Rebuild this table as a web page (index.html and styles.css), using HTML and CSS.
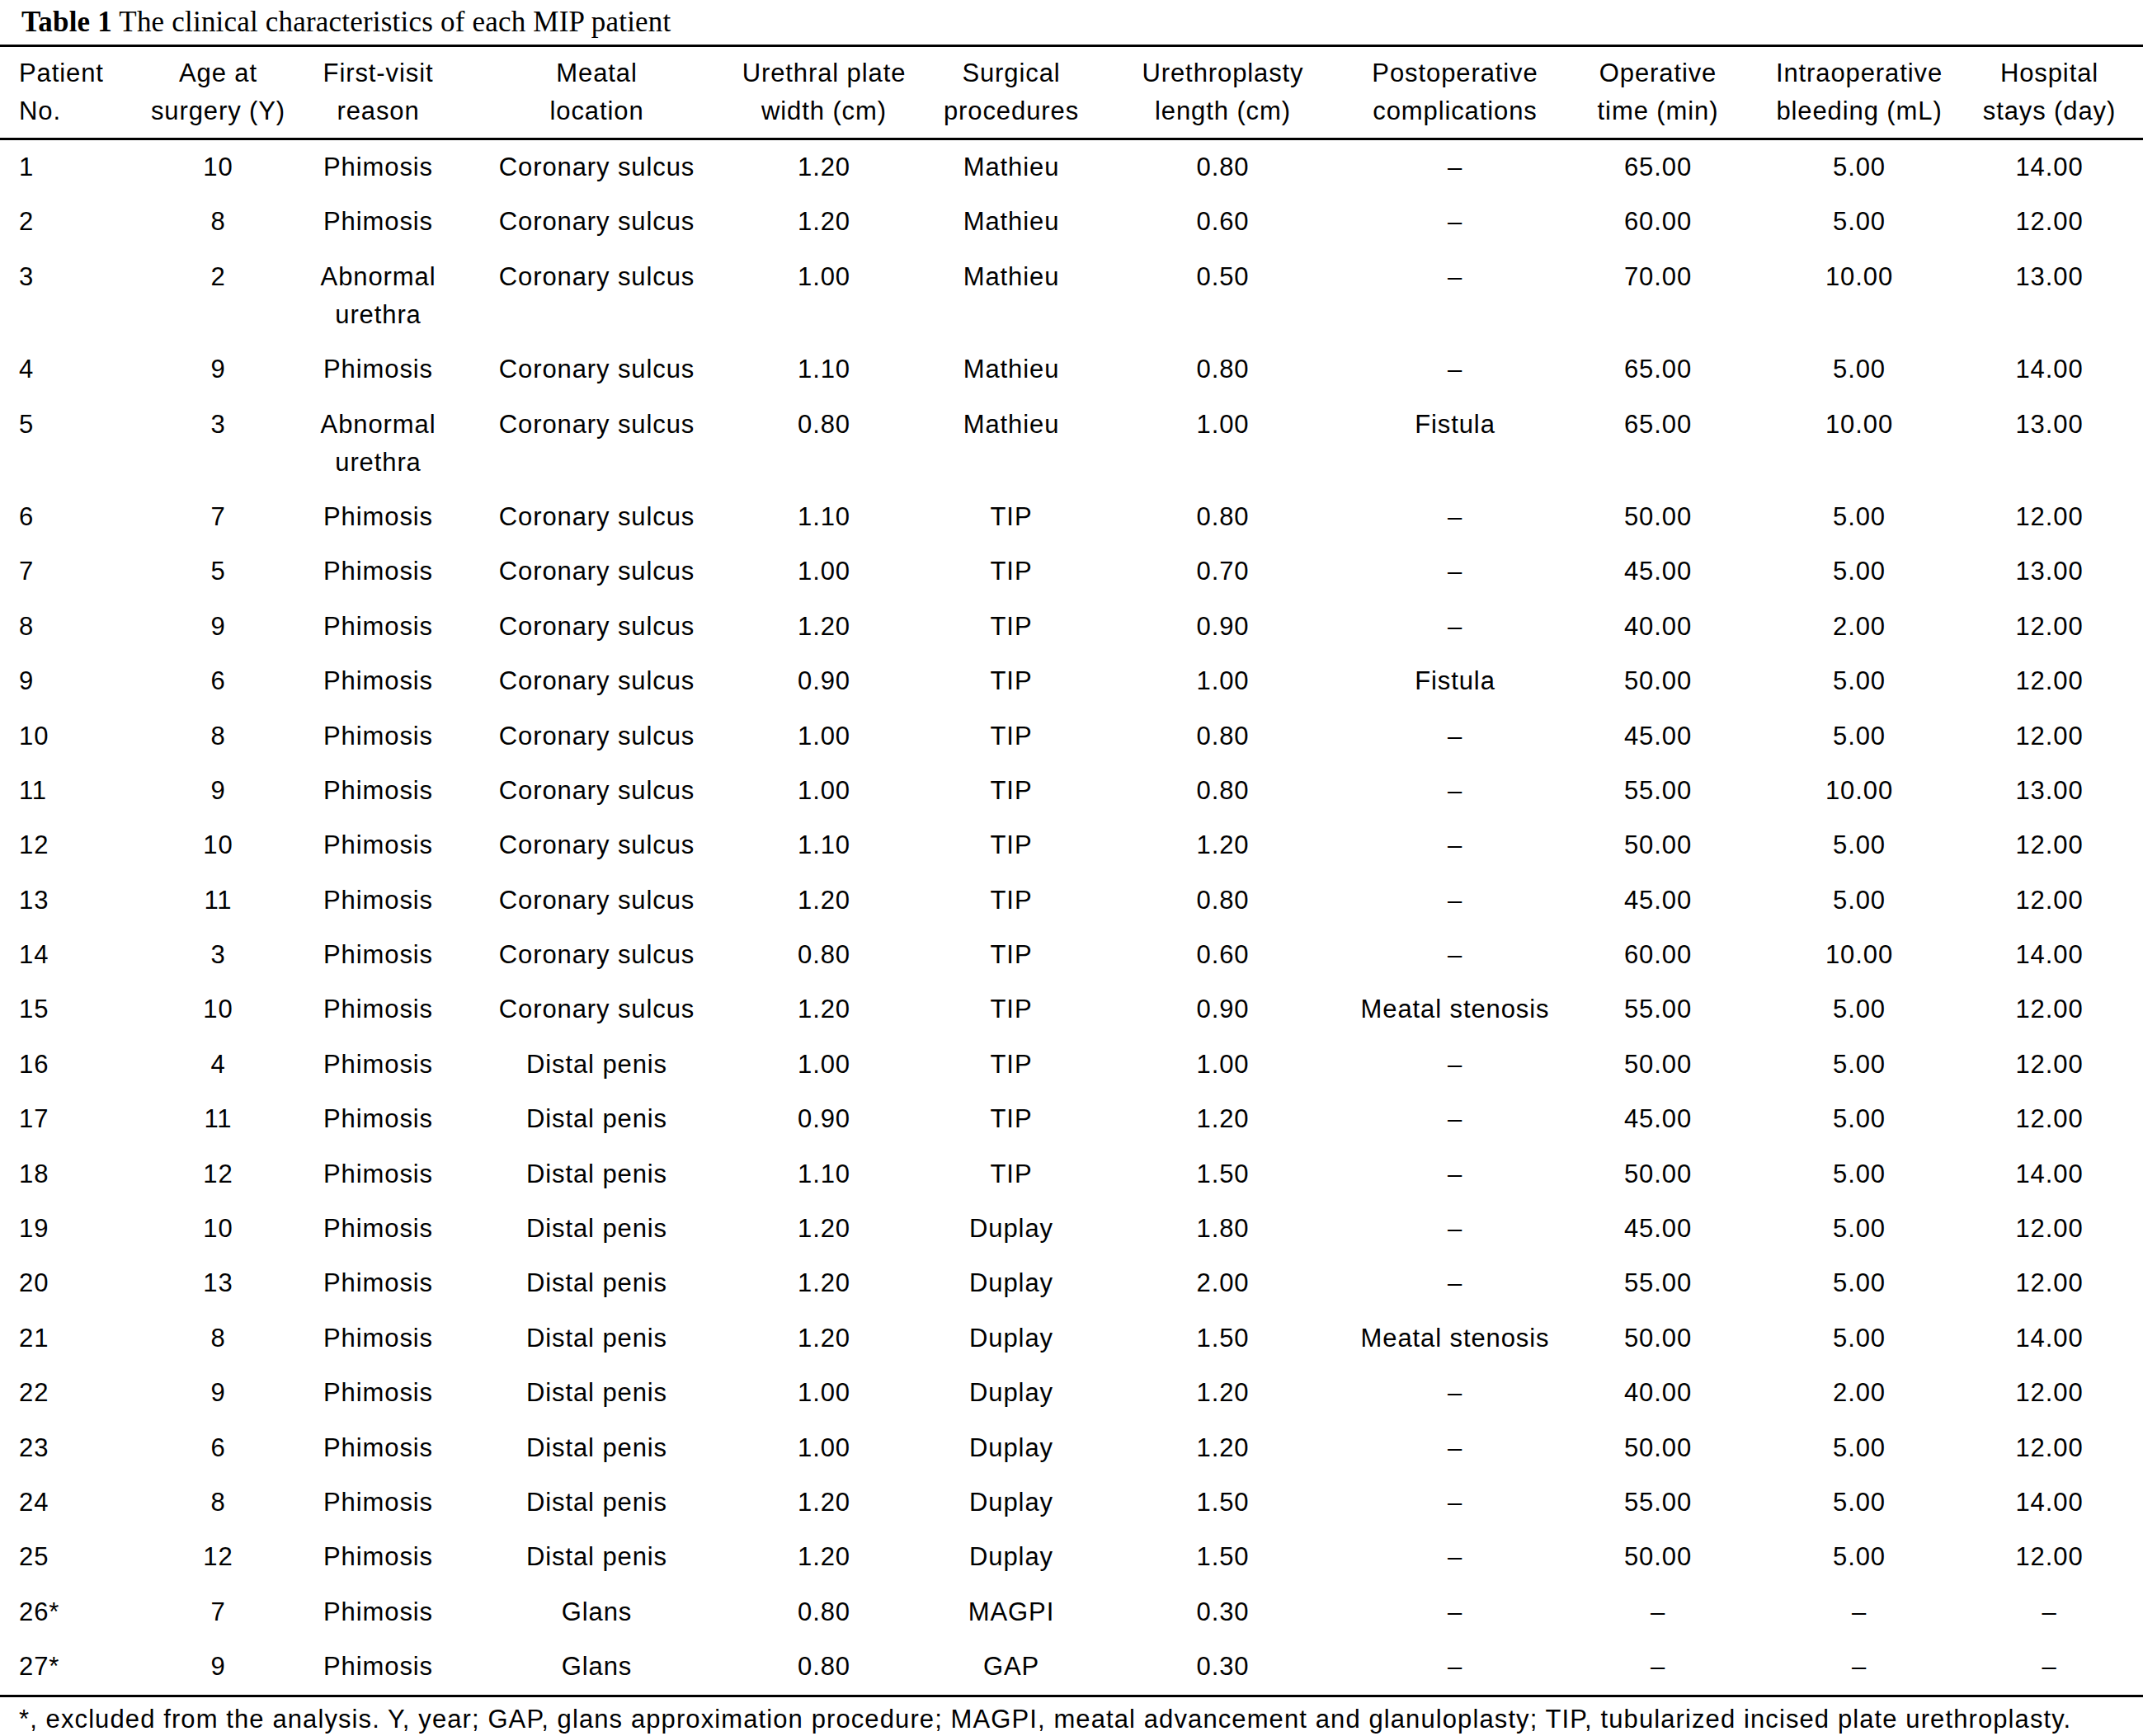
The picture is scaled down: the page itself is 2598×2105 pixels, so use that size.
FILE: index.html
```html
<!DOCTYPE html>
<html lang="en">
<head>
<meta charset="utf-8">
<title>Table 1</title>
<link rel="stylesheet" href="styles.css">
</head>
<body>
<div class="page">
  <p class="caption"><b>Table 1</b> The clinical characteristics of each MIP patient</p>
  <table class="data">
    <colgroup>
      <col class="c1"><col class="c2"><col class="c3"><col class="c4"><col class="c5"><col class="c6"><col class="c7"><col class="c8"><col class="c9"><col class="c10"><col class="c11">
    </colgroup>
    <thead>
      <tr>
        <th>Patient<br>No.</th>
        <th>Age at<br>surgery (Y)</th>
        <th>First-visit<br>reason</th>
        <th>Meatal<br>location</th>
        <th>Urethral plate<br>width (cm)</th>
        <th>Surgical<br>procedures</th>
        <th>Urethroplasty<br>length (cm)</th>
        <th>Postoperative<br>complications</th>
        <th>Operative<br>time (min)</th>
        <th>Intraoperative<br>bleeding (mL)</th>
        <th>Hospital<br>stays (day)</th>
      </tr>
    </thead>
    <tbody>
      <tr><td>1</td><td>10</td><td>Phimosis</td><td>Coronary sulcus</td><td>1.20</td><td>Mathieu</td><td>0.80</td><td>–</td><td>65.00</td><td>5.00</td><td>14.00</td></tr>
      <tr><td>2</td><td>8</td><td>Phimosis</td><td>Coronary sulcus</td><td>1.20</td><td>Mathieu</td><td>0.60</td><td>–</td><td>60.00</td><td>5.00</td><td>12.00</td></tr>
      <tr><td>3</td><td>2</td><td>Abnormal<br>urethra</td><td>Coronary sulcus</td><td>1.00</td><td>Mathieu</td><td>0.50</td><td>–</td><td>70.00</td><td>10.00</td><td>13.00</td></tr>
      <tr><td>4</td><td>9</td><td>Phimosis</td><td>Coronary sulcus</td><td>1.10</td><td>Mathieu</td><td>0.80</td><td>–</td><td>65.00</td><td>5.00</td><td>14.00</td></tr>
      <tr><td>5</td><td>3</td><td>Abnormal<br>urethra</td><td>Coronary sulcus</td><td>0.80</td><td>Mathieu</td><td>1.00</td><td>Fistula</td><td>65.00</td><td>10.00</td><td>13.00</td></tr>
      <tr><td>6</td><td>7</td><td>Phimosis</td><td>Coronary sulcus</td><td>1.10</td><td>TIP</td><td>0.80</td><td>–</td><td>50.00</td><td>5.00</td><td>12.00</td></tr>
      <tr><td>7</td><td>5</td><td>Phimosis</td><td>Coronary sulcus</td><td>1.00</td><td>TIP</td><td>0.70</td><td>–</td><td>45.00</td><td>5.00</td><td>13.00</td></tr>
      <tr><td>8</td><td>9</td><td>Phimosis</td><td>Coronary sulcus</td><td>1.20</td><td>TIP</td><td>0.90</td><td>–</td><td>40.00</td><td>2.00</td><td>12.00</td></tr>
      <tr><td>9</td><td>6</td><td>Phimosis</td><td>Coronary sulcus</td><td>0.90</td><td>TIP</td><td>1.00</td><td>Fistula</td><td>50.00</td><td>5.00</td><td>12.00</td></tr>
      <tr><td>10</td><td>8</td><td>Phimosis</td><td>Coronary sulcus</td><td>1.00</td><td>TIP</td><td>0.80</td><td>–</td><td>45.00</td><td>5.00</td><td>12.00</td></tr>
      <tr><td>11</td><td>9</td><td>Phimosis</td><td>Coronary sulcus</td><td>1.00</td><td>TIP</td><td>0.80</td><td>–</td><td>55.00</td><td>10.00</td><td>13.00</td></tr>
      <tr><td>12</td><td>10</td><td>Phimosis</td><td>Coronary sulcus</td><td>1.10</td><td>TIP</td><td>1.20</td><td>–</td><td>50.00</td><td>5.00</td><td>12.00</td></tr>
      <tr><td>13</td><td>11</td><td>Phimosis</td><td>Coronary sulcus</td><td>1.20</td><td>TIP</td><td>0.80</td><td>–</td><td>45.00</td><td>5.00</td><td>12.00</td></tr>
      <tr><td>14</td><td>3</td><td>Phimosis</td><td>Coronary sulcus</td><td>0.80</td><td>TIP</td><td>0.60</td><td>–</td><td>60.00</td><td>10.00</td><td>14.00</td></tr>
      <tr><td>15</td><td>10</td><td>Phimosis</td><td>Coronary sulcus</td><td>1.20</td><td>TIP</td><td>0.90</td><td>Meatal stenosis</td><td>55.00</td><td>5.00</td><td>12.00</td></tr>
      <tr><td>16</td><td>4</td><td>Phimosis</td><td>Distal penis</td><td>1.00</td><td>TIP</td><td>1.00</td><td>–</td><td>50.00</td><td>5.00</td><td>12.00</td></tr>
      <tr><td>17</td><td>11</td><td>Phimosis</td><td>Distal penis</td><td>0.90</td><td>TIP</td><td>1.20</td><td>–</td><td>45.00</td><td>5.00</td><td>12.00</td></tr>
      <tr><td>18</td><td>12</td><td>Phimosis</td><td>Distal penis</td><td>1.10</td><td>TIP</td><td>1.50</td><td>–</td><td>50.00</td><td>5.00</td><td>14.00</td></tr>
      <tr><td>19</td><td>10</td><td>Phimosis</td><td>Distal penis</td><td>1.20</td><td>Duplay</td><td>1.80</td><td>–</td><td>45.00</td><td>5.00</td><td>12.00</td></tr>
      <tr><td>20</td><td>13</td><td>Phimosis</td><td>Distal penis</td><td>1.20</td><td>Duplay</td><td>2.00</td><td>–</td><td>55.00</td><td>5.00</td><td>12.00</td></tr>
      <tr><td>21</td><td>8</td><td>Phimosis</td><td>Distal penis</td><td>1.20</td><td>Duplay</td><td>1.50</td><td>Meatal stenosis</td><td>50.00</td><td>5.00</td><td>14.00</td></tr>
      <tr><td>22</td><td>9</td><td>Phimosis</td><td>Distal penis</td><td>1.00</td><td>Duplay</td><td>1.20</td><td>–</td><td>40.00</td><td>2.00</td><td>12.00</td></tr>
      <tr><td>23</td><td>6</td><td>Phimosis</td><td>Distal penis</td><td>1.00</td><td>Duplay</td><td>1.20</td><td>–</td><td>50.00</td><td>5.00</td><td>12.00</td></tr>
      <tr><td>24</td><td>8</td><td>Phimosis</td><td>Distal penis</td><td>1.20</td><td>Duplay</td><td>1.50</td><td>–</td><td>55.00</td><td>5.00</td><td>14.00</td></tr>
      <tr><td>25</td><td>12</td><td>Phimosis</td><td>Distal penis</td><td>1.20</td><td>Duplay</td><td>1.50</td><td>–</td><td>50.00</td><td>5.00</td><td>12.00</td></tr>
      <tr><td>26*</td><td>7</td><td>Phimosis</td><td>Glans</td><td>0.80</td><td>MAGPI</td><td>0.30</td><td>–</td><td>–</td><td>–</td><td>–</td></tr>
      <tr><td>27*</td><td>9</td><td>Phimosis</td><td>Glans</td><td>0.80</td><td>GAP</td><td>0.30</td><td>–</td><td>–</td><td>–</td><td>–</td></tr>
    </tbody>
  </table>
  <p class="note">*, excluded from the analysis. Y, year; GAP, glans approximation procedure; MAGPI, meatal advancement and glanuloplasty; TIP, tubularized incised plate urethroplasty.</p>
</div>
</body>
</html>
```

FILE: styles.css
```css
html, body {
  margin: 0;
  padding: 0;
  background: #ffffff;
  color: #000000;
}

.page {
  width: 2598px;
  font-family: "Liberation Sans", Arial, Helvetica, sans-serif;
  font-size: 31px;
  letter-spacing: 0.9px;
}

.caption {
  margin: 0;
  padding-left: 26px;
  height: 54px;
  line-height: 54px;
  font-family: "Liberation Serif", "Times New Roman", serif;
  font-size: 35px;
  letter-spacing: 0.2px;
  white-space: nowrap;
}

.caption b {
  font-weight: bold;
}

.data {
  width: 2598px;
  border-collapse: collapse;
  table-layout: fixed;
  border-top: 3px solid #000;
  border-bottom: 3px solid #000;
}

.c1 { width: 171px; }
.c2 { width: 187px; }
.c3 { width: 201px; }
.c4 { width: 329px; }
.c5 { width: 222px; }
.c6 { width: 232px; }
.c7 { width: 281px; }
.c8 { width: 282px; }
.c9 { width: 210px; }
.c10 { width: 278px; }
.c11 { width: 205px; }

.data th,
.data td {
  padding: 0;
  text-align: center;
  vertical-align: top;
  line-height: 46px;
  font-weight: normal;
  white-space: nowrap;
}

.data th {
  padding-top: 9px;
  padding-bottom: 9px;
  border-bottom: 3px solid #000;
}

.data td {
  padding-top: 10px;
  padding-bottom: 10.4px;
}

.data th:first-child,
.data td:first-child {
  text-align: left;
  padding-left: 23px;
}

.data th:last-child,
.data td:last-child {
  padding-right: 22px;
}

.note {
  margin: 0;
  padding: 4px 0 0 23px;
  line-height: 46px;
  letter-spacing: 1.1px;
  white-space: nowrap;
}
```
